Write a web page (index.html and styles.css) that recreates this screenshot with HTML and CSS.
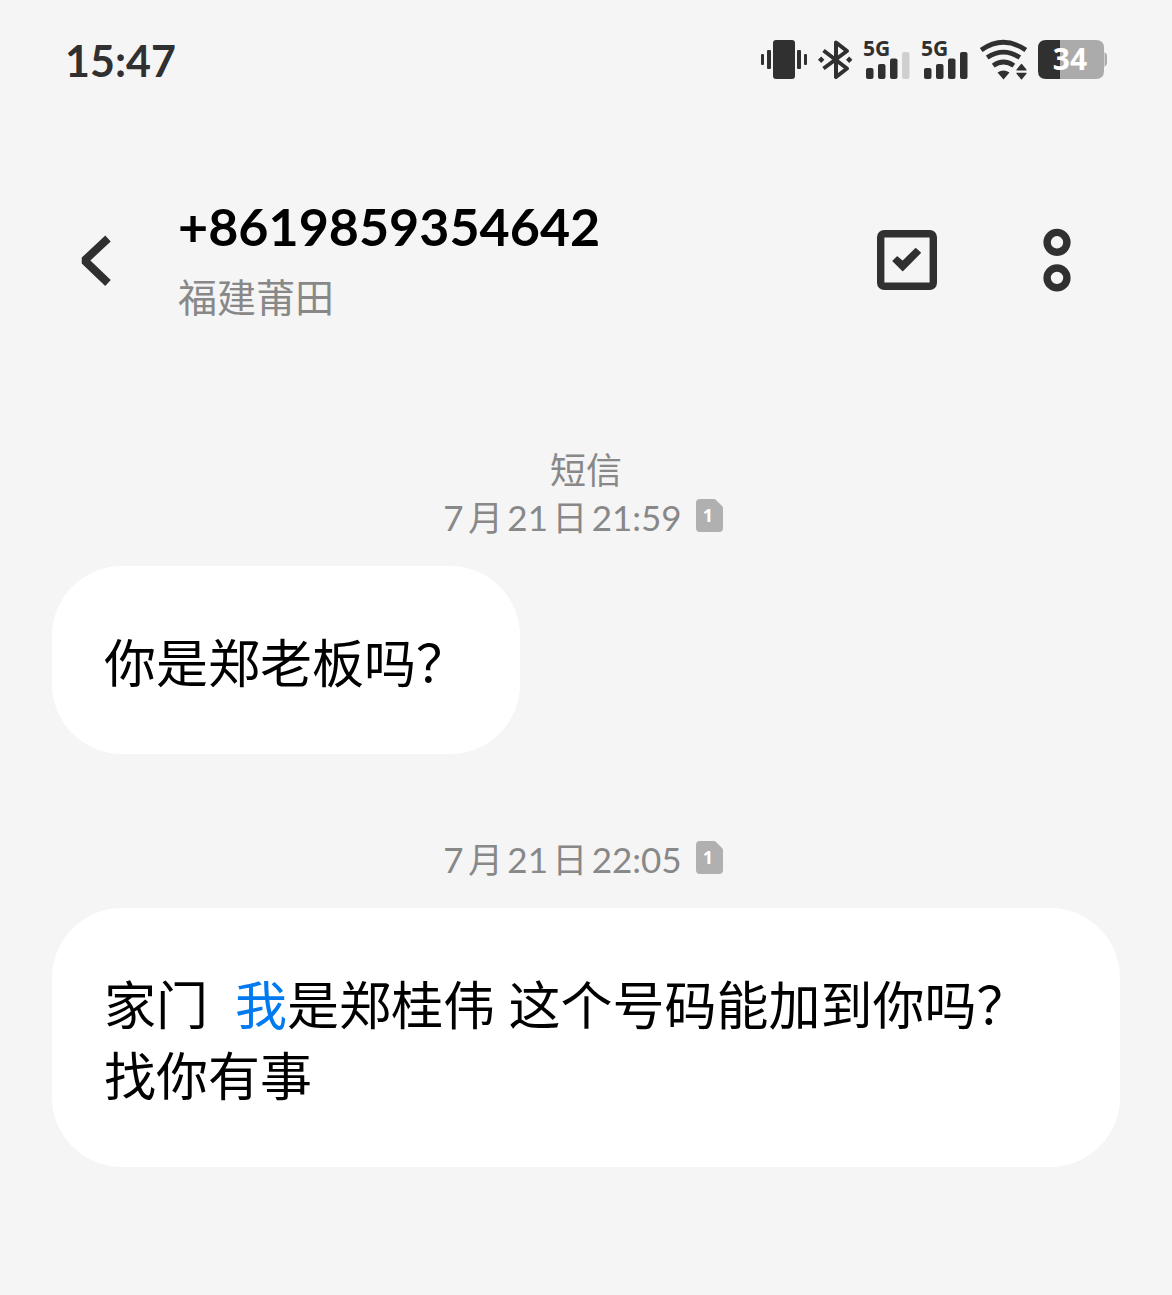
FILE: index.html
```html
<!DOCTYPE html>
<html lang="zh-CN">
<head>
    <meta charset="UTF-8">
    <meta name="viewport" content="width=device-width, initial-scale=1.0">
    <title>短信</title>
    <link rel="stylesheet" href="styles.css">
</head>
<body>

    <!-- Status bar -->
    <div class="status-bar">
        <span class="clock">15:47</span>
        <div class="status-icons">
            <!-- Vibrate -->
            <svg width="46" height="40" viewBox="0 0 46 40">
                <rect x="12" y="0" width="22" height="39" rx="3"/>
                <rect x="0" y="14" width="3" height="11" rx="1"/>
                <rect x="6" y="10" width="4" height="19" rx="1"/>
                <rect x="36" y="10" width="4" height="19" rx="1"/>
                <rect x="43" y="14" width="3" height="11" rx="1"/>
            </svg>
            <!-- Bluetooth -->
            <svg width="33" height="40" viewBox="0 0 33 40">
                <path d="M4.5 10.5 L28 28.5 L17 37 V2.5 L28 11 L4.5 28.5" fill="none" stroke="#303030" stroke-width="4" stroke-linejoin="round"/>
                <path d="M-1 19.7 l3.2 -3.2 3.2 3.2 -3.2 3.2z M27 19.7 l3.2 -3.2 3.2 3.2 -3.2 3.2z"/>
            </svg>
            <!-- SIM 1 signal -->
            <svg width="46" height="40" viewBox="0 0 46 40">
                <text class="network" x="-1" y="16">5G</text>
                <rect x="2" y="28" width="7.5" height="11" rx="2"/>
                <rect x="14" y="24" width="7.5" height="15" rx="2"/>
                <rect x="26" y="18.5" width="7.5" height="20.5" rx="2"/>
                <rect class="off" x="38" y="12" width="7.5" height="27" rx="2"/>
            </svg>
            <!-- SIM 2 signal -->
            <svg width="46" height="40" viewBox="0 0 46 40">
                <text class="network" x="-1" y="16">5G</text>
                <rect x="2" y="28" width="7.5" height="11" rx="2"/>
                <rect x="14" y="24" width="7.5" height="15" rx="2"/>
                <rect x="26" y="18.5" width="7.5" height="20.5" rx="2"/>
                <rect x="38" y="12" width="7.5" height="27" rx="2"/>
            </svg>
            <!-- Wi-Fi -->
            <svg width="46" height="40" viewBox="0 0 46 40">
                <g fill="none" stroke="#303030" stroke-width="4.8">
                    <path d="M1.2 10 Q23.5 -5.4 45.8 10"/>
                    <path d="M7.2 17.6 Q23.5 6.6 39.8 17.6"/>
                    <path d="M13.2 25.6 Q23.5 18.4 33.8 25.6"/>
                </g>
                <path d="M17.5 32.4 Q23.5 28.6 29.5 32.4 L23.5 39.4z"/>
                <path d="M37 30 L41.5 24.5 L46 30z M37 33.3 H46 L41.5 38.8z" stroke="#303030" stroke-width="1.2" stroke-linejoin="round"/>
            </svg>
            <!-- Battery -->
            <svg width="69" height="40" viewBox="0 0 69 40">
                <path class="battery" d="M22 0 H58 Q66 0 66 8 V31 Q66 39 58 39 H22z"/>
                <path class="battery" d="M66.5 12 Q69 13.5 69 16 V23 Q69 25.5 66.5 27z"/>
                <path d="M22 0 H8 Q0 0 0 8 V31 Q0 39 8 39 H22z"/>
                <text class="level" x="32" y="30" text-anchor="middle">34</text>
            </svg>
        </div>
    </div>

    <!-- Conversation header -->
    <header class="header">
        <button class="icon-button" aria-label="返回">
            <svg width="44" height="64" viewBox="0 0 44 64">
                <path d="M34 10.5 L10.5 32.5 L34 55" fill="none" stroke="#303030" stroke-width="8" stroke-linejoin="bevel"/>
            </svg>
        </button>
        <div class="contact">
            <h1>+8619859354642</h1>
            <p>福建莆田</p>
        </div>
        <div class="actions">
            <button class="icon-button" aria-label="选择">
                <svg width="60" height="64" viewBox="0 0 60 64">
                    <rect x="3.7" y="5.7" width="52.6" height="52.6" rx="3.5" fill="none" stroke="#303030" stroke-width="7.4"/>
                    <path d="M16.2 33 L20.2 29 L25.7 33.5 L38.7 20.7 L43.2 24.8 L25.7 42.5z" stroke="#303030" stroke-width="1.5" stroke-linejoin="round"/>
                </svg>
            </button>
            <button class="icon-button" aria-label="更多">
                <svg width="28" height="64" viewBox="0 0 28 64">
                    <g fill="none" stroke="#303030" stroke-width="7.4">
                        <circle cx="14" cy="14.3" r="9.9"/>
                        <circle cx="14" cy="49.9" r="9.9"/>
                    </g>
                </svg>
            </button>
        </div>
    </header>

    <!-- Messages -->
    <main class="messages">
        <div class="info">
            <p>短信</p>
            <div class="date">
                <time>7月21日21:59</time>
                <svg width="27" height="33" viewBox="0 0 27 33">
                    <path class="sim" d="M4 0 H18 Q19 0 20 1 L26 7 Q27 8 27 9 V29 Q27 33 23 33 H4 Q0 33 0 29 V4 Q0 0 4 0z"/>
                    <text class="sim-number" x="12" y="23" text-anchor="middle">1</text>
                </svg>
            </div>
        </div>
        <div class="bubble">你是郑老板吗？</div>

        <div class="info">
            <div class="date">
                <time>7月21日22:05</time>
                <svg width="27" height="33" viewBox="0 0 27 33">
                    <path class="sim" d="M4 0 H18 Q19 0 20 1 L26 7 Q27 8 27 9 V29 Q27 33 23 33 H4 Q0 33 0 29 V4 Q0 0 4 0z"/>
                    <text class="sim-number" x="12" y="23" text-anchor="middle">1</text>
                </svg>
            </div>
        </div>
        <div class="bubble">家门&nbsp; <a href="#">我</a>是郑桂伟 这个号码能加到你吗？找你有事</div>
    </main>

</body>
</html>
```

FILE: styles.css
```css
* {
    box-sizing: border-box;
}
body {
    font-family: Lato, "Noto Sans CJK SC", sans-serif;
    background-color: #f5f5f5;
    color: #000;
    margin: 0;
}
h1, p {
    margin: 0;
}
svg {
    display: block;
    fill: #303030;
    overflow: visible;
}

/* Status bar */
.status-bar {
    display: flex;
    align-items: center;
    justify-content: space-between;
    height: 120px;
    padding: 0 65px;
}
.clock {
    font-size: 43px;
    font-weight: bold;
    color: #303030;
}
.status-icons {
    display: flex;
    gap: 12px;
}
.network {
    font-family: "Open Sans", sans-serif;
    font-size: 21px;
    font-weight: bold;
}
.off {
    fill: #cfcfcf;
}
.battery {
    fill: #ababab;
}
.level {
    font-family: "Noto Sans", sans-serif;
    font-size: 30px;
    font-weight: bold;
    fill: #fff;
}

/* Header */
.header {
    display: flex;
    align-items: center;
    height: 280px;
    padding: 0 101px 0 74px;
}
.icon-button {
    padding: 0;
    border: none;
    background: none;
    cursor: pointer;
}
.contact {
    flex: 1;
    margin-left: 60px;
}
.contact h1 {
    font-size: 52px;
    font-weight: bold;
    line-height: 74px;
}
.contact p {
    font-size: 39px;
    line-height: 68px;
    color: #888;
}
.actions {
    display: flex;
    gap: 106px;
}

/* Messages */
.messages {
    display: flex;
    flex-direction: column;
    align-items: flex-start;
    padding: 47px 52px;
}
.info {
    align-self: stretch;
    margin-bottom: 25px;
    font-size: 36px;
    line-height: 47px;
    text-align: center;
    color: #888;
}
.date {
    display: flex;
    align-items: center;
    justify-content: center;
    gap: 14px;
    padding-right: 6px;
    font-size: 35px;
    text-autospace: normal;
}
.date svg {
    margin-bottom: 4px;
}
.sim {
    fill: #b0b0b0;
}
.sim-number {
    font-family: "Open Sans", sans-serif;
    font-size: 18px;
    font-weight: bold;
    fill: #fff;
}
.bubble {
    margin-bottom: 82px;
    padding: 61px 52px 56px;
    border-radius: 70px;
    background-color: #fff;
    font-family: "Open Sans", "Noto Sans CJK SC", sans-serif;
    font-size: 52px;
    line-height: 71px;
}
.bubble a {
    color: #007aee;
    text-decoration: none;
}
```
